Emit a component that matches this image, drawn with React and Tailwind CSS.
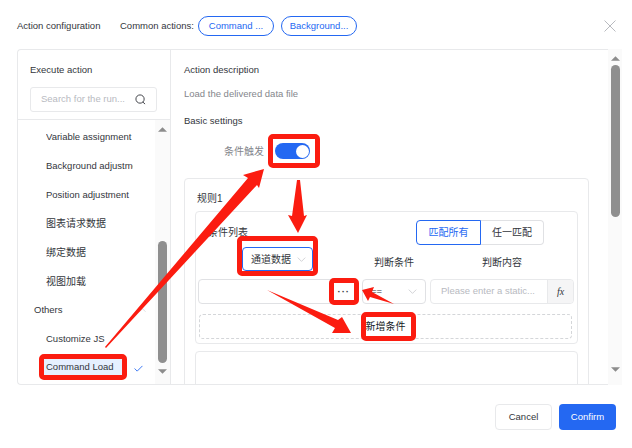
import React from "react";

const font = { fontFamily: '"Liberation Sans","Noto Sans CJK SC",sans-serif' };

function Chevron({ className, up }) {
  return (
    <svg viewBox="0 0 14 8" className={className} fill="none" stroke="currentColor" strokeWidth="1">
      <path d={up ? "M1 7.5 7 1.5 13 7.5" : "M1 1 7 7 13 1"} />
    </svg>
  );
}

function Tri({ up }) {
  return (
    <svg viewBox="0 0 10 5" className="w-[9px] h-[5px] block mx-auto text-[#8c8c8c]" fill="currentColor">
      <path d={up ? "M5 0 10 5H0Z" : "M0 0H10L5 5Z"} />
    </svg>
  );
}

const listItems = [
  ["Variable assignment", "text-[9.5px]"],
  ["Background adjustment", "text-[9.5px]"],
  ["Position adjustment", "text-[9.5px]"],
  ["图表请求数据", "text-[10px]"],
  ["绑定数据", "text-[10px]"],
  ["视图加载", "text-[10px]"],
];

function Row({ children }) {
  return <div className="h-[28.75px] flex items-center">{children}</div>;
}

function LeftPanel() {
  return (
    <div className="w-[153px] shrink-0 border-r border-[#e8e9eb] flex flex-col">
      <div className="px-[12px] pt-[13px] h-[70px] border-b border-[#e8e9eb]">
        <div className="text-[9.5px] leading-[13px] text-[#33363c]">Execute action</div>
        <div className="mt-[11px] h-[25px] w-[127px] border border-[#e8e9eb] rounded-[3px] flex items-center pl-[10px] pr-[10px] justify-between">
          <span className="text-[9.5px] text-[#b8babf] whitespace-nowrap">Search for the run...</span>
          <svg viewBox="0 0 12 12" className="w-[11px] h-[11px] shrink-0 text-[#33363c]" fill="none" stroke="currentColor" strokeWidth="1">
            <circle cx="5.5" cy="5.5" r="4.5" />
            <path d="M8.6 8.8 11 11" />
          </svg>
        </div>
      </div>
      <div className="flex flex-1 min-h-0">
        <div className="w-[137px] pt-[3px] text-[9.5px] text-[#33363c]">
          {listItems.map(([t, size]) => (
            <Row key={t}>
              <span className={"ml-[28px] w-[87px] overflow-hidden whitespace-nowrap " + size}>{t}</span>
            </Row>
          ))}
          <Row>
            <span className="ml-[16px]">Others</span>
            <Chevron up className="ml-auto mr-[9px] w-[7px] h-[4px] text-[#b8babf]" />
          </Row>
          <Row>
            <span className="ml-[28px]">Customize JS</span>
          </Row>
          <Row>
            <span className="ml-[26px] w-[78px] h-[17px] pl-[2px] bg-[#e6f0ff] flex items-center">Command Load</span>
            <svg viewBox="0 0 10 8" className="ml-[12px] mt-[2px] w-[9px] h-[7px] text-[#2468f2]" fill="none" stroke="currentColor" strokeWidth="1">
              <path d="M.5 4 3.5 7 9.5 1" />
            </svg>
          </Row>
        </div>
        <div className="w-[15px] bg-[#fafafa] flex flex-col items-center pt-[7px] pb-[7px]">
          <Tri up />
          <div className="mt-[109px] w-[9px] h-[122px] rounded-full bg-[#8f8f8f]" />
          <div className="mt-[6px]"><Tri /></div>
        </div>
      </div>
    </div>
  );
}

function Card({ className, children }) {
  return <div className={"border border-[#e8e9eb] rounded-[4px] " + className}>{children}</div>;
}

function RightPanel() {
  return (
    <div className="flex-1 min-w-0 pl-[13px] pr-[19px] overflow-hidden">
      <div className="pt-[13px] text-[9.5px] leading-[13px] text-[#33363c]">Action description</div>
      <div className="mt-[11px] text-[9.5px] leading-[13px] text-[#84868c]">Load the delivered data file</div>
      <div className="mt-[14px] text-[9.5px] leading-[13px] text-[#33363c]">Basic settings</div>
      <div className="mt-[16px] h-[16px] flex items-center">
        <span className="ml-[40px] text-[10px] text-[#84868c]">条件触发</span>
        <span className="ml-[11px] w-[35px] h-[16px] rounded-full bg-[#2468f2] flex items-center justify-end pr-[1.5px]">
          <span className="w-[13px] h-[13px] rounded-full bg-white" />
        </span>
      </div>
      <Card className="mt-[19px] h-[260px] px-[10px] pt-[13px]">
        <div className="ml-[2px] text-[10px] leading-[13px] text-[#33363c]">规则1</div>
        <Card className="mt-[6px] h-[133px] px-[2px] pt-[8px]">
          <div className="flex justify-between items-start pr-[31px]">
            <span className="ml-[10px] mt-[6px] text-[10px] leading-[13px] text-[#33363c]">条件列表</span>
            <div className="flex h-[25px] w-[128px] text-[10px] rounded-[4px]">
              <span className="w-[65px] flex items-center justify-center border border-[#2468f2] rounded-l-[4px] text-[#2468f2]">匹配所有</span>
              <span className="flex-1 flex items-center justify-center border border-l-0 border-[#e0e1e4] rounded-r-[4px] text-[#33363c]">任一匹配</span>
            </div>
          </div>
          <div className="flex gap-[4px] mt-[2px] h-[24px] text-[10px] text-[#33363c]">
            <div className="w-[160px] pl-[44px]">
              <div className="w-[71px] h-[24px] border border-[#2468f2] rounded-[4px] flex items-center pl-[8px] gap-[6px]">
                <span>通道数据</span>
                <Chevron className="w-[9px] h-[5px] text-[#b8babf]" />
              </div>
            </div>
            <div className="w-[64px] text-center pt-[9px] leading-[13px]">判断条件</div>
            <div className="w-[144px] text-center pt-[9px] leading-[13px]">判断内容</div>
          </div>
          <div className="flex gap-[4px] mt-[8px] h-[25px] text-[9.5px]">
            <div className="w-[160px] border border-[#e0e1e4] rounded-[4px] flex items-center justify-end pr-[7px]">
              <span className="text-[#33363c] tracking-[1px] font-bold leading-none">···</span>
            </div>
            <div className="w-[64px] border border-[#e0e1e4] rounded-[4px] flex items-center justify-between pl-[8px] pr-[8px] text-[#33363c]">
              <span>==</span>
              <Chevron className="w-[9px] h-[5px] text-[#b8babf]" />
            </div>
            <div className="w-[144px] border border-[#e8e9eb] rounded-[4px] flex items-center">
              <span className="flex-1 pl-[10px] text-[#b8babf] whitespace-nowrap">Please enter a static...</span>
              <span className="w-[26px] h-full bg-[#f5f5f6] border-l border-[#e8e9eb] flex items-center justify-center text-[#33363c] italic text-[10px] rounded-r-[4px]" style={{ fontFamily: '"Liberation Serif",serif' }}>fx</span>
            </div>
          </div>
          <div className="mt-[10px] ml-[1px] w-[373px] h-[25px] border border-dashed border-[#d4d6d9] rounded-[4px] flex items-center justify-center text-[10px] text-[#151b26]">
            新增条件
          </div>
        </Card>
        <Card className="mt-[7px] h-[80px]" />
      </Card>
    </div>
  );
}

function Annotations() {
  const boxes = [
    "left-[268px] top-[134px] w-[52px] h-[34px]",
    "left-[237px] top-[236px] w-[81px] h-[40px]",
    "left-[329px] top-[278px] w-[30px] h-[27px]",
    "left-[361px] top-[312px] w-[55px] h-[29px]",
    "left-[39px] top-[354px] w-[88px] h-[26px]",
  ];
  return (
    <div className="absolute inset-0 pointer-events-none">
      {boxes.map((b) => (
        <div key={b} className={"absolute border-[5px] border-[#fb1c10] rounded-[5px] " + b} />
      ))}
      <svg viewBox="0 0 632 448" className="absolute inset-0 w-[632px] h-[448px]" fill="#fb1c10">
        <polygon points="105,347 248,178 243,175 264,169 259,188 257,185 106,348" />
        <polygon points="297,180 300,180 304,216 307,215 298,233 288,215 292,216" />
        <polygon points="362,290 374,287 372,292 394,304 370,297 368,301" />
        <polygon points="267,290 338,320 342,317 351,333 332,333 335,328" />
      </svg>
    </div>
  );
}

export default function App() {
  return (
    <div className="relative w-[632px] h-[448px] bg-white overflow-hidden flex flex-col text-[#151b26]" style={font}>
      <div className="h-[49px] flex items-center pl-[17px] pr-[16px] pt-[3px] text-[9.5px] shrink-0">
        <span className="text-[#33363c] w-[103px] whitespace-nowrap">Action configuration</span>
        <span className="text-[#33363c] w-[78px] whitespace-nowrap">Common actions:</span>
        <span className="w-[76px] h-[20px] rounded-full border border-[#2468f2] text-[#2468f2] flex items-center justify-center">Command ...</span>
        <span className="ml-[7px] w-[76px] h-[20px] rounded-full border border-[#2468f2] text-[#2468f2] flex items-center justify-center">Background...</span>
        <svg viewBox="0 0 12 12" className="ml-auto w-[12px] h-[12px] text-[#b8babf]" fill="none" stroke="currentColor" strokeWidth="1">
          <path d="M.5.5 11.5 11.5M11.5.5.5 11.5" />
        </svg>
      </div>
      <div className="h-[336px] flex pl-[17px] shrink-0">
        <div className="w-[591px] flex border border-r-0 border-[#e8e9eb] rounded-l-[4px]">
          <LeftPanel />
          <RightPanel />
        </div>
        <div className="w-[14px] bg-[#fafafa] flex flex-col items-center pt-[7px]">
          <Tri up />
          <div className="mt-[4px] w-[9px] h-[152px] rounded-full bg-[#8f8f8f]" />
          <div className="mt-[150px]"><Tri /></div>
        </div>
      </div>
      <div className="flex justify-end gap-[7px] pt-[19px] pr-[16px] text-[9.5px]">
        <span className="w-[57px] h-[26px] border border-[#e8e9eb] rounded-[4px] flex items-center justify-center text-[#33363c]">Cancel</span>
        <span className="w-[57px] h-[26px] bg-[#2468f2] rounded-[4px] flex items-center justify-center text-white">Confirm</span>
      </div>
      <Annotations />
    </div>
  );
}
